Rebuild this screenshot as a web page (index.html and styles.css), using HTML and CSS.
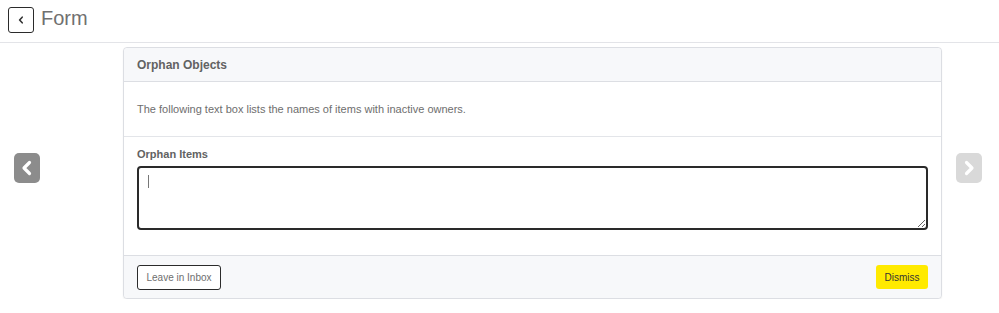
FILE: index.html
```html
<!DOCTYPE html>
<html lang="en">
<head>
    <meta charset="UTF-8">
    <title>Form</title>
    <link rel="stylesheet" href="styles.css">
</head>
<body>
    <div class="top-bar">
        <button class="back-btn" aria-label="Back">
            <svg width="10" height="10" viewBox="0 0 10 10"><path d="M6.2 2.2 L3.6 5 L6.2 7.8" fill="none" stroke="#333" stroke-width="1.6" stroke-linecap="round" stroke-linejoin="round"/></svg>
        </button>
        <span class="page-title">Form</span>
    </div>

    <div class="pager">
        <div class="nav-col nav-left">
            <button class="nav-btn nav-prev" aria-label="Previous">
                <svg width="14" height="16" viewBox="0 0 14 16"><path d="M9.5 2.5 L4 8 L9.5 13.5" fill="none" stroke="#fff" stroke-width="3.2" stroke-linecap="round" stroke-linejoin="round"/></svg>
            </button>
        </div>

        <div class="card">
            <div class="card-header">Orphan Objects</div>
            <div class="card-intro">The following text box lists the names of items with inactive owners.</div>
            <div class="card-field">
                <label for="orphanItems">Orphan Items</label>
                <div class="textarea-wrap">
                    <textarea id="orphanItems"></textarea>
                    <span class="caret"></span>
                </div>
            </div>
            <div class="card-footer">
                <button class="btn btn-outline">Leave in Inbox</button>
                <button class="btn btn-yellow">Dismiss</button>
            </div>
        </div>

        <div class="nav-col nav-right">
            <button class="nav-btn nav-next" aria-label="Next">
                <svg width="14" height="16" viewBox="0 0 14 16"><path d="M4.5 2.5 L10 8 L4.5 13.5" fill="none" stroke="#fff" stroke-width="3.2" stroke-linecap="round" stroke-linejoin="round"/></svg>
            </button>
        </div>
    </div>
</body>
</html>
```

FILE: styles.css
```css
* {
    margin: 0;
    padding: 0;
    box-sizing: border-box;
}

body {
    font-family: 'Liberation Sans', Arial, sans-serif;
    background: #ffffff;
    color: #666666;
}

button {
    font-family: inherit;
    cursor: pointer;
}

.top-bar {
    height: 43px;
    display: flex;
    align-items: center;
    padding: 0 8px 2px 8px;
    border-bottom: 1px solid #e3e4e8;
}

.back-btn {
    width: 26px;
    height: 26px;
    border: 1.5px solid #2b2b2b;
    border-radius: 3px;
    background: #fff;
    display: flex;
    align-items: center;
    justify-content: center;
}

.page-title {
    margin-left: 7px;
    font-size: 20px;
    color: #707070;
    margin-top: -4px;
}

.pager {
    display: flex;
    align-items: flex-start;
    padding-top: 4px;
}

.nav-col {
    display: flex;
    padding-top: 106px;
}

.nav-left {
    width: 123px;
    padding-left: 14px;
}

.nav-right {
    padding-left: 14px;
}

.nav-btn {
    width: 26px;
    height: 30px;
    border: none;
    border-radius: 5px;
    display: flex;
    align-items: center;
    justify-content: center;
}

.nav-prev {
    background: #8c8c8c;
}

.nav-next {
    background: #d9d9d9;
}

.card {
    width: 819px;
    border: 1px solid #dcdee3;
    border-radius: 4px;
    background: #fff;
    box-shadow: 0 1px 2px rgba(0, 0, 0, 0.06);
}

.card-header {
    height: 34px;
    padding: 0 13px;
    display: flex;
    align-items: center;
    background: #f7f8fa;
    border-bottom: 1px solid #dcdee3;
    border-radius: 4px 4px 0 0;
    font-size: 12px;
    font-weight: bold;
    color: #626262;
}

.card-intro {
    height: 55px;
    padding: 0 13px;
    display: flex;
    align-items: center;
    border-bottom: 1px solid #e3e5e9;
    font-size: 11px;
    color: #6e6e6e;
}

.card-field {
    padding: 11px 13px 25px 13px;
}

.card-field label {
    display: block;
    font-size: 11px;
    font-weight: bold;
    color: #626262;
    margin-bottom: 6px;
}

.textarea-wrap {
    position: relative;
}

.card-field textarea {
    display: block;
    width: 100%;
    height: 64px;
    border: 2px solid #2a2a2a;
    border-radius: 4px;
    padding: 6px 9px;
    font-family: inherit;
    font-size: 13px;
    color: #666;
    resize: vertical;
    outline: none;
}

.caret {
    position: absolute;
    left: 11px;
    top: 9px;
    width: 1px;
    height: 13px;
    background: #777;
}

.card-footer {
    height: 43px;
    padding: 0 13px;
    display: flex;
    align-items: center;
    justify-content: space-between;
    background: #f7f8fa;
    border-top: 1px solid #dcdee3;
    border-radius: 0 0 4px 4px;
}

.btn {
    height: 25px;
    font-size: 10px;
    border-radius: 3px;
    padding: 0 8px;
}

.btn-outline {
    width: 84px;
    background: #fff;
    border: 1.5px solid #2b2b2b;
    color: #6e6e6e;
}

.btn-yellow {
    width: 52px;
    background: #ffea00;
    border: none;
    color: #333333;
    padding: 0;
    height: 24px;
}
```
